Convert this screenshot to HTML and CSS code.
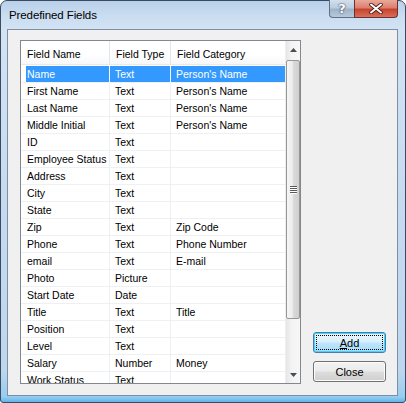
FILE: index.html
```html
<!DOCTYPE html>
<html>
<head>
<meta charset="utf-8">
<link rel="stylesheet" href="styles.css">
</head>
<body>
<div class="window">
  <div class="titlebar">
    <span class="title">Predefined Fields</span>
    <div class="caption-buttons">
      <div class="cap-btn help">?</div>
      <div class="cap-btn close">
        <svg width="14" height="11" viewBox="0 0 14 11"><path d="M2 1.5 L12 9.5 M12 1.5 L2 9.5" stroke="#4a1a14" stroke-width="3.6" stroke-linecap="round"/><path d="M2 1.5 L12 9.5 M12 1.5 L2 9.5" stroke="#ffffff" stroke-width="2" stroke-linecap="round"/></svg>
      </div>
    </div>
  </div>
  <div class="client">
    <div class="listbox">
      <div class="listarea">
        <div class="header">
          <div class="hcell c1">Field Name</div>
          <div class="hcell c2">Field Type</div>
          <div class="hcell c3">Field Category</div>
        </div>
        <div class="rows">
          <div class="row selected"><div class="cell c1">Name</div><div class="cell c2">Text</div><div class="cell c3">Person's Name</div></div>
          <div class="row"><div class="cell c1">First Name</div><div class="cell c2">Text</div><div class="cell c3">Person's Name</div></div>
          <div class="row"><div class="cell c1">Last Name</div><div class="cell c2">Text</div><div class="cell c3">Person's Name</div></div>
          <div class="row"><div class="cell c1">Middle Initial</div><div class="cell c2">Text</div><div class="cell c3">Person's Name</div></div>
          <div class="row"><div class="cell c1">ID</div><div class="cell c2">Text</div><div class="cell c3"></div></div>
          <div class="row"><div class="cell c1">Employee Status</div><div class="cell c2">Text</div><div class="cell c3"></div></div>
          <div class="row"><div class="cell c1">Address</div><div class="cell c2">Text</div><div class="cell c3"></div></div>
          <div class="row"><div class="cell c1">City</div><div class="cell c2">Text</div><div class="cell c3"></div></div>
          <div class="row"><div class="cell c1">State</div><div class="cell c2">Text</div><div class="cell c3"></div></div>
          <div class="row"><div class="cell c1">Zip</div><div class="cell c2">Text</div><div class="cell c3">Zip Code</div></div>
          <div class="row"><div class="cell c1">Phone</div><div class="cell c2">Text</div><div class="cell c3">Phone Number</div></div>
          <div class="row"><div class="cell c1">email</div><div class="cell c2">Text</div><div class="cell c3">E-mail</div></div>
          <div class="row"><div class="cell c1">Photo</div><div class="cell c2">Picture</div><div class="cell c3"></div></div>
          <div class="row"><div class="cell c1">Start Date</div><div class="cell c2">Date</div><div class="cell c3"></div></div>
          <div class="row"><div class="cell c1">Title</div><div class="cell c2">Text</div><div class="cell c3">Title</div></div>
          <div class="row"><div class="cell c1">Position</div><div class="cell c2">Text</div><div class="cell c3"></div></div>
          <div class="row"><div class="cell c1">Level</div><div class="cell c2">Text</div><div class="cell c3"></div></div>
          <div class="row"><div class="cell c1">Salary</div><div class="cell c2">Number</div><div class="cell c3">Money</div></div>
          <div class="row"><div class="cell c1">Work Status</div><div class="cell c2">Text</div><div class="cell c3"></div></div>
        </div>
      </div>
      <div class="scrollbar">
        <div class="arrow up"><svg width="7" height="4" viewBox="0 0 7 4"><path d="M0 4 L3.5 0 L7 4 Z" fill="#4d4d4d"/></svg></div>
        <div class="track">
          <div class="thumb"><div class="grip"><span></span><span></span><span></span><span></span></div></div>
        </div>
        <div class="arrow down"><svg width="7" height="4" viewBox="0 0 7 4"><path d="M0 0 L3.5 4 L7 0 Z" fill="#4d4d4d"/></svg></div>
      </div>
    </div>
    <div class="buttons">
      <div class="btn default"><span class="focus"><u>A</u>dd</span></div>
      <div class="btn">Close</div>
    </div>
  </div>
</div>
</body>
</html>
```

FILE: styles.css
```css
* { box-sizing: border-box; }
html, body { margin: 0; padding: 0; }
body {
  width: 406px;
  height: 403px;
  overflow: hidden;
  background: #ffffff;
  font-family: "Liberation Sans", Arial, sans-serif;
}
.window {
  width: 406px;
  height: 403px;
  border: 1px solid #3a4a60;
  border-radius: 7px 7px 3px 3px;
  background: linear-gradient(to bottom, #b9d1ea 0px, #c9dcf0 14px, #d3e3f4 29px, #c6daf0 200px, #bdd7ef 370px, #94cdf0 396px, #5fb4e6 401px);
  padding: 0 7px 6px 6px;
  display: flex;
  flex-direction: column;
}
.titlebar {
  height: 28px;
  display: flex;
  align-items: flex-start;
  justify-content: space-between;
}
.title {
  font-size: 11.5px;
  color: #000;
  margin: 8px 0 0 2px;
  letter-spacing: -0.1px;
}
.caption-buttons {
  display: flex;
  margin-right: 0;
  margin-top: -1px;
}
.cap-btn {
  height: 18px;
  border: 1px solid #5f6f86;
  border-top: none;
  display: flex;
  align-items: center;
  justify-content: center;
}
.cap-btn.help {
  width: 25px;
  border-radius: 0 0 0 4px;
  border-right: none;
  background: linear-gradient(to bottom, #d3dfec 0%, #bccddf 45%, #9fb2c8 55%, #b7c9dc 100%);
  color: #fff;
  font-size: 13px;
  font-weight: bold;
  text-shadow: 0 0 2px #2c3e58, 0 0 1px #2c3e58;
  font-family: "DejaVu Sans", sans-serif;
}
.cap-btn.close {
  width: 44px;
  border-radius: 0 0 4px 0;
  border-color: #6b3030;
  background: linear-gradient(to bottom, #e9a99c 0%, #dc7f6f 45%, #c8432d 55%, #d6705a 100%);
}
.client {
  flex: 1;
  background: #f0f0f0;
  border: 1px solid #7f8ea3;
  display: flex;
  padding: 10px 11px 11px 12px;
}
.listbox {
  width: 282px;
  height: 344px;
  border: 1px solid #828790;
  background: #fff;
  display: flex;
}
.listarea {
  flex: 1;
  overflow: hidden;
  font-size: 10.5px;
  color: #000;
}
.header {
  height: 24px;
  display: flex;
  border-bottom: 1px solid #e9eaec;
  background: linear-gradient(to bottom, #ffffff 0%, #ffffff 60%, #f6f7f9 100%);
}
.hcell {
  display: flex;
  align-items: center;
  padding-left: 6px;
  border-right: 1px solid #e3e5e8;
  padding-top: 3px;
}
.c1 { width: 89px; }
.c2 { width: 61px; }
.c3 { width: 114px; }
.hcell.c1 { padding-left: 6px; }
.hcell.c3 { border-right: none; }
.rows {
  padding-top: 1px;
}
.row {
  height: 17px;
  display: flex;
  border-bottom: 1px solid #eef0f2;
}
.cell {
  height: 16px;
  line-height: 16px;
  padding-left: 5px;
  border-right: 1px solid #eef0f2;
  white-space: nowrap;
  overflow: hidden;
}
.cell.c1 { margin-left: 5px; width: 84px; padding-left: 1px; }
.cell.c3 { border-right: none; }
.row.selected .cell {
  background: #3399ff;
  color: #fff;
  border-right-color: #ffffff;
}
.scrollbar {
  width: 15px;
  display: flex;
  flex-direction: column;
  background: linear-gradient(to right, #e6e6e6 0%, #f3f3f3 40%, #f7f7f7 100%);
  border-left: 1px solid #eeeeee;
}
.arrow {
  height: 17px;
  display: flex;
  align-items: center;
  justify-content: center;
  flex: none;
}
.track {
  flex: 1;
  padding-top: 2px;
}
.thumb {
  height: 259px;
  margin-left: 0;
  border: 1px solid #979797;
  border-radius: 2px;
  background: linear-gradient(to right, #f5f5f5 0%, #ececec 45%, #d9d9d9 55%, #cfcfcf 100%);
  display: flex;
  align-items: center;
  justify-content: center;
}
.grip {
  display: flex;
  flex-direction: column;
  gap: 1px;
}
.grip span {
  display: block;
  width: 7px;
  height: 1px;
  background: #5a5a5a;
  box-shadow: 0 1px 0 #ffffff;
}
.buttons {
  margin-left: 12px;
  display: flex;
  flex-direction: column;
  justify-content: flex-end;
  gap: 8px;
  padding-bottom: 2px;
}
.btn {
  width: 73px;
  height: 21px;
  border: 1px solid #707070;
  border-radius: 3px;
  background: linear-gradient(to bottom, #f2f2f2 0%, #ebebeb 48%, #dddddd 52%, #cfcfcf 100%);
  box-shadow: inset 0 0 0 1px #fcfcfc;
  font-size: 11px;
  color: #000;
  display: flex;
  align-items: center;
  justify-content: center;
}
.btn.default {
  border-color: #3c7fb1;
  box-shadow: inset 0 0 0 1px #48d2f6;
  background: linear-gradient(to bottom, #eaf6fd 0%, #d9f0fc 48%, #bee6fd 52%, #a7d9f5 100%);
  padding: 2px;
}
.btn.default .focus {
  width: 100%;
  height: 100%;
  border: 1px dotted #000;
  display: flex;
  align-items: center;
  justify-content: center;
}
```
